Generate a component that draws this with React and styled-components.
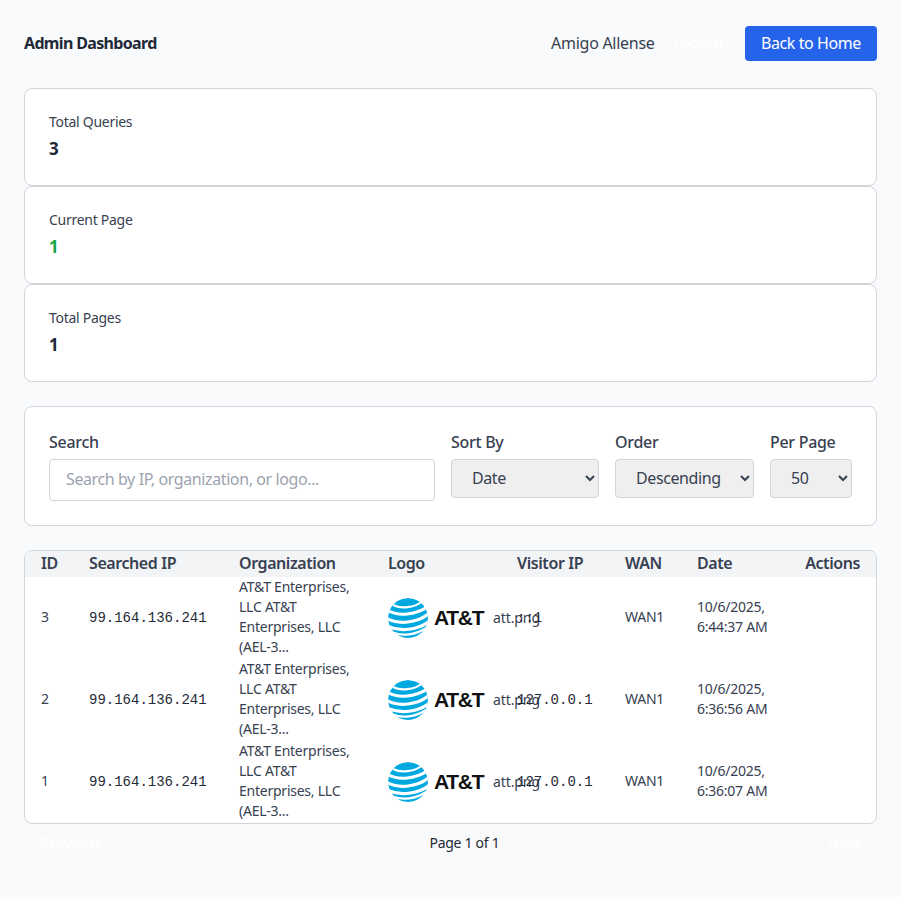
import React from 'react';
import styled, { createGlobalStyle } from 'styled-components';

const FONT = '"Noto Sans", "Open Sans", sans-serif';
const Global = createGlobalStyle`
  html, body { margin: 0; padding: 0; background: #f9fafb; }
  * { box-sizing: border-box; }
  body { font-family: ${FONT}; color: #1f2937; }
`;
const Page = styled.div`
  width: 901px; min-height: 897px; padding: 26px 24px 0; background: #f9fafb;
`;
const Header = styled.header`
  display: flex; align-items: center; justify-content: space-between; margin-bottom: 27px; height: 35px;
`;
const Title = styled.h1`
  margin: 0 0 2px; font-size: 16px; line-height: 24px; font-weight: 700; color: #1f2937; letter-spacing: -0.66px;
`;
const HeaderRight = styled.div`
  display: flex; align-items: center;
`;
const UserName = styled.span`
  font-size: 16px; line-height: 24px; color: #374151; margin: 0 18px 2px 0; letter-spacing: -0.28px;
`;
const GhostLink = styled.span`
  font-size: 16px; line-height: 24px; color: #ffffff; letter-spacing: -0.3px;
`;
const LogoutLink = styled(GhostLink)`
  margin: 0 21px 2px 0;
`;
const HomeButton = styled.button`
  height: 35px; width: 132px; border: 0; border-radius: 4px; background: #2563eb; color: #fff;
  font: 400 16px/24px ${FONT}; padding: 0 0 2px; letter-spacing: -0.42px;
`;
const Stats = styled.section`
  display: flex; flex-direction: column; margin-bottom: 24px;
`;
const StatCard = styled.div`
  height: 98px; padding: 23px 24px; background: #fff; border: 1px solid #d1d5db; border-radius: 8px;
`;
const StatLabel = styled.div`
  font-size: 14px; line-height: 20px; color: #374151; letter-spacing: -0.28px; margin-bottom: 3px;
`;
const StatValue = styled.div`
  font-size: 17px; line-height: 28px; font-weight: 700; color: ${p => p.$color || '#1f2937'};
`;
const Filters = styled.section`
  height: 120px; padding: 24px; background: #fff; border: 1px solid #d1d5db; border-radius: 8px;
  display: flex; gap: 16px; margin-bottom: 24px;
`;
const Field = styled.label`
  display: flex; flex-direction: column; flex: ${p => p.$grow ? '1 1 0' : '0 0 auto'}; min-width: 0;
`;
const FieldLabel = styled.span`
  font-size: 16px; line-height: 24px; font-weight: 500; color: #374151; margin: -1px 0 5px; letter-spacing: -0.3px;
`;
const SearchInput = styled.input`
  height: 42px; width: 100%; padding: 0 16px 2px; border: 1px solid #d1d5db; border-radius: 4px; background: #fff;
  font: 400 16px ${FONT}; outline: none; letter-spacing: -0.4px;
  &::placeholder { color: #9ca3af; opacity: 1; }
`;
const Select = styled.select`
  height: 39px; width: ${p => p.$w}px; padding: 0 4px 2px 16px; border: 1px solid #d1d5db; border-radius: 4px;
  background-color: #efefef; color: #374151; font: 400 16px ${FONT}; letter-spacing: -0.4px;
`;
const TableWrap = styled.section`
  height: 274px; background: #fff; border: 1px solid #d1d5db; border-radius: 8px; overflow: hidden;
`;
const COLS = '48px 150px 149px 129px 108px 72px 107px 1fr';
const HeadRow = styled.div`
  display: grid; grid-template-columns: ${COLS}; padding: 0 16px; height: 26px; align-items: center;
  background: #f3f4f6;
`;
const HeadCell = styled.div`
  font-size: 16px; line-height: 24px; font-weight: 600; color: #374151; white-space: nowrap; letter-spacing: -0.42px;
  margin-bottom: 2px;
  text-align: ${p => p.$right ? 'right' : 'left'};
`;
const Row = styled.div`
  display: grid; grid-template-columns: ${COLS}; padding: 0 16px; height: 82px; align-items: center;
  font-size: 14px; line-height: 20px; color: #374151;
`;
const TextCell = styled.div`
  margin-top: -2px; letter-spacing: -0.24px;
`;
const Mono = styled.div`
  font: 400 14px/20px "Liberation Mono", monospace; color: #1f2937; white-space: nowrap;
`;
const OrgCell = styled(TextCell)`
  width: 124px;
`;
const LogoCell = styled.div`
  display: flex; align-items: center; white-space: nowrap; width: 160px;
`;
const Wordmark = styled.span`
  font: 700 21px/40px "Liberation Sans", sans-serif; color: #111; letter-spacing: -1.3px; margin-left: 6px; width: 51px;
`;
const FileName = styled.span`
  font-size: 14px; line-height: 20px; color: #374151; margin-left: 8px; letter-spacing: -0.1px;
`;
const Pager = styled.nav`
  display: flex; align-items: center; justify-content: space-between; padding: 8px 16px; height: 38px;
`;
const PageText = styled.span`
  font-size: 14px; line-height: 20px; color: #1f2937; letter-spacing: -0.28px;
`;

const Globe = () => (
  <svg width="40" height="40" viewBox="0 0 40 40" aria-hidden="true">
    <defs><clipPath id="g"><circle cx="20" cy="20" r="20" /></clipPath></defs>
    <g clipPath="url(#g)" fill="none" stroke="#fff">
      <circle cx="20" cy="20" r="20" fill="#00a8e0" stroke="none" />
      <path d="M5 7 C13 11 26 10 34 3.5" strokeWidth="2.2" />
      <path d="M-1 12 C10 19 28 17 41 8" strokeWidth="3" />
      <path d="M-1 20.5 C10 27 30 25 41 15.5" strokeWidth="3.2" />
      <path d="M0 28.5 C12 34 30 32 41 23.5" strokeWidth="3.2" />
      <path d="M5 34.5 C14 38.5 28 37 38 30" strokeWidth="2.2" />
    </g>
  </svg>
);

const rows = [
  { id: 3, visitor: '::1', date: ['10/6/2025,', '6:44:37 AM'] },
  { id: 2, visitor: '127.0.0.1', date: ['10/6/2025,', '6:36:56 AM'] },
  { id: 1, visitor: '127.0.0.1', date: ['10/6/2025,', '6:36:07 AM'] },
];

export default function App() {
  return (
    <Page>
      <Global />
      <Header>
        <Title>Admin Dashboard</Title>
        <HeaderRight>
          <UserName>Amigo Allense</UserName>
          <LogoutLink>Logout</LogoutLink>
          <HomeButton>Back to Home</HomeButton>
        </HeaderRight>
      </Header>
      <Stats>
        <StatCard><StatLabel>Total Queries</StatLabel><StatValue>3</StatValue></StatCard>
        <StatCard><StatLabel>Current Page</StatLabel><StatValue $color="#16a34a">1</StatValue></StatCard>
        <StatCard><StatLabel>Total Pages</StatLabel><StatValue>1</StatValue></StatCard>
      </Stats>
      <Filters>
        <Field $grow><FieldLabel>Search</FieldLabel><SearchInput placeholder="Search by IP, organization, or logo..." /></Field>
        <Field><FieldLabel>Sort By</FieldLabel><Select $w={148}><option>Date</option></Select></Field>
        <Field><FieldLabel>Order</FieldLabel><Select $w={139}><option>Descending</option></Select></Field>
        <Field><FieldLabel>Per Page</FieldLabel><Select $w={82}><option>50</option></Select></Field>
      </Filters>
      <TableWrap>
        <HeadRow>
          <HeadCell>ID</HeadCell><HeadCell>Searched IP</HeadCell><HeadCell>Organization</HeadCell><HeadCell>Logo</HeadCell>
          <HeadCell>Visitor IP</HeadCell><HeadCell>WAN</HeadCell><HeadCell>Date</HeadCell><HeadCell $right>Actions</HeadCell>
        </HeadRow>
        {rows.map(r => (
          <Row key={r.id}>
            <TextCell>{r.id}</TextCell>
            <Mono>99.164.136.241</Mono>
            <OrgCell>AT&amp;T Enterprises, LLC AT&amp;T Enterprises, LLC (AEL-3...</OrgCell>
            <LogoCell><Globe /><Wordmark>AT&amp;T</Wordmark><FileName>att.png</FileName></LogoCell>
            <Mono>{r.visitor}</Mono>
            <TextCell>WAN1</TextCell>
            <TextCell>{r.date[0]}<br />{r.date[1]}</TextCell>
            <div />
          </Row>
        ))}
      </TableWrap>
      <Pager>
        <GhostLink>Previous</GhostLink>
        <PageText>Page 1 of 1</PageText>
        <GhostLink>Next</GhostLink>
      </Pager>
    </Page>
  );
}
